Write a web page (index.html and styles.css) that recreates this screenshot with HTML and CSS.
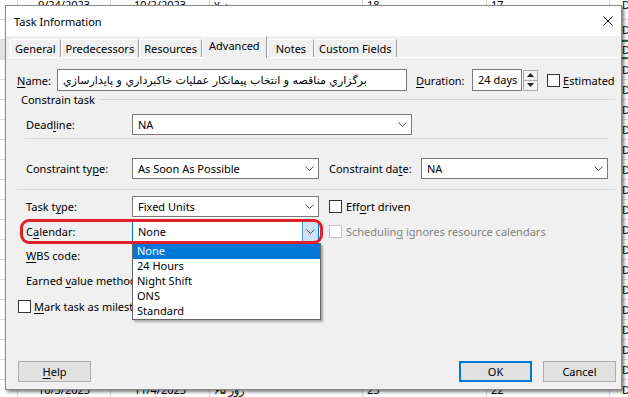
FILE: index.html
```html
<!DOCTYPE html>
<html lang="en">
<head>
<meta charset="UTF-8">
<meta name="viewport" content="width=device-width, initial-scale=1.0">
<title>Task Information</title>
<link rel="stylesheet" href="styles.css">
</head>
<body>

<!-- the project sheet behind the dialog (only the edges show) -->
<div class="sheet">
   <div class="sheet-row first"><span></span><span class="c">9/24/2023</span><span class="c">10/2/2023</span><span>۷ روز</span><span>18</span><span>17</span><span>D</span></div>
   <div class="sheet-row"><span></span><span></span><span></span><span></span><span></span><span></span><span>D</span></div>
   <div class="sheet-row sel"><span></span><span></span><span></span><span></span><span></span><span></span><span>D</span></div>
   <div class="sheet-row"><span></span><span></span><span></span><span></span><span></span><span></span><span>D</span></div>
   <div class="sheet-row"><span></span><span></span><span></span><span></span><span></span><span></span><span>D</span></div>
   <div class="sheet-row"><span></span><span></span><span></span><span></span><span></span><span></span><span>D</span></div>
   <div class="sheet-row"><span></span><span></span><span></span><span></span><span></span><span></span><span>D</span></div>
   <div class="sheet-row"><span></span><span></span><span></span><span></span><span></span><span></span><span>D</span></div>
   <div class="sheet-row"><span></span><span></span><span></span><span></span><span></span><span></span><span>D</span></div>
   <div class="sheet-row"><span></span><span></span><span></span><span></span><span></span><span></span><span>D</span></div>
   <div class="sheet-row"><span></span><span></span><span></span><span></span><span></span><span></span><span>D</span></div>
   <div class="sheet-row"><span></span><span></span><span></span><span></span><span></span><span></span><span>D</span></div>
   <div class="sheet-row"><span></span><span></span><span></span><span></span><span></span><span></span><span>D</span></div>
   <div class="sheet-row"><span></span><span></span><span></span><span></span><span></span><span></span><span>D</span></div>
   <div class="sheet-row"><span></span><span></span><span></span><span></span><span></span><span></span><span>D</span></div>
   <div class="sheet-row"><span></span><span></span><span></span><span></span><span></span><span></span><span>D</span></div>
   <div class="sheet-row"><span></span><span></span><span></span><span></span><span></span><span></span><span>D</span></div>
   <div class="sheet-row"><span></span><span></span><span></span><span></span><span></span><span></span><span>D</span></div>
   <div class="sheet-row"><span></span><span></span><span></span><span></span><span></span><span></span><span>D</span></div>
   <div class="sheet-row"><span></span><span class="c">10/3/2023</span><span class="c">11/4/2023</span><span>۶۵ روز</span><span>23</span><span>22</span><span>D</span></div>
</div>

<div class="dialog">
   <div class="titlebar">
      <span class="title">Task Information</span>
      <svg class="close" width="10" height="10" viewBox="0 0 10 10"><path d="M0.5 0.5L9.5 9.5M9.5 0.5L0.5 9.5"/></svg>
   </div>

   <div class="dlg-body">
      <div class="tabs">
         <div class="tab">General</div>
         <div class="tab">Predecessors</div>
         <div class="tab">Resources</div>
         <div class="tab active">Advanced</div>
         <div class="tab wide">Notes</div>
         <div class="tab">Custom Fields</div>
      </div>

      <div class="panel">
         <div class="row name-row">
            <label class="lbl lbl-name"><u>N</u>ame:</label>
            <div class="field name-field"><span class="fa" dir="rtl">برگزاري مناقصه و انتخاب پيمانکار عمليات خاکبرداري و پايدارسازي</span></div>
            <label class="lbl lbl-dur"><u>D</u>uration:</label>
            <div class="field dur-field">24 days</div>
            <div class="spin">
               <span><svg width="7" height="4" viewBox="0 0 7 4"><path d="M0 4L3.5 0L7 4Z"/></svg></span>
               <span><svg width="7" height="4" viewBox="0 0 7 4"><path d="M0 0L3.5 4L7 0Z"/></svg></span>
            </div>
            <span class="check est-check"></span>
            <span class="chk-lbl"><u>E</u>stimated</span>
         </div>

         <div class="legend"><span>Constrain task</span><i class="rule"></i></div>

         <div class="row inner first-inner">
            <label class="lbl">Dead<u>l</u>ine:</label>
            <div class="field combo deadline">NA
               <svg class="chev" width="9" height="5" viewBox="0 0 9 5"><polyline points="0.5,0.5 4.5,4.5 8.5,0.5"/></svg>
            </div>
         </div>

         <div class="sep sep-short"></div>

         <div class="row inner">
            <label class="lbl">Constraint ty<u>p</u>e:</label>
            <div class="field combo">As Soon As Possible
               <svg class="chev" width="9" height="5" viewBox="0 0 9 5"><polyline points="0.5,0.5 4.5,4.5 8.5,0.5"/></svg>
            </div>
            <label class="lbl lbl-date">Constraint da<u>t</u>e:</label>
            <div class="field combo">NA
               <svg class="chev" width="9" height="5" viewBox="0 0 9 5"><polyline points="0.5,0.5 4.5,4.5 8.5,0.5"/></svg>
            </div>
         </div>

         <div class="sep sep-long"></div>

         <div class="row inner">
            <label class="lbl">Task t<u>y</u>pe:</label>
            <div class="field combo">Fixed Units
               <svg class="chev" width="9" height="5" viewBox="0 0 9 5"><polyline points="0.5,0.5 4.5,4.5 8.5,0.5"/></svg>
            </div>
            <span class="check side-check"></span>
            <span class="chk-lbl">Eff<u>o</u>rt driven</span>
         </div>

         <div class="row inner cal-row">
            <label class="lbl">C<u>a</u>lendar:</label>
            <div class="field combo open">None
               <span class="drop"><svg class="chev" width="9" height="5" viewBox="0 0 9 5"><polyline points="0.5,0.5 4.5,4.5 8.5,0.5"/></svg></span>
               <div class="dropdown">
                  <div class="on">None</div>
                  <div>24 Hours</div>
                  <div>Night Shift</div>
                  <div>ONS</div>
                  <div>Standard</div>
               </div>
            </div>
            <span class="check side-check off"></span>
            <span class="chk-lbl off">Schedulin<u>g</u> ignores resource calendars</span>
            <div class="ring"></div>
         </div>

         <div class="row inner wbs-row">
            <label class="lbl"><u>W</u>BS code:</label>
         </div>

         <div class="row inner ev-row">
            <label class="lbl clip">Earned <u>v</u>alue method:</label>
         </div>

         <div class="row ms-row">
            <span class="check"></span>
            <span class="chk-lbl clip"><u>M</u>ark task as milestone</span>
         </div>
      </div>

      <div class="buttons">
         <button class="btn"><u>H</u>elp</button>
         <button class="btn default">OK</button>
         <button class="btn">Cancel</button>
      </div>
   </div>
</div>

</body>
</html>
```

FILE: styles.css
```css
* {
   box-sizing: border-box;
}

html,
body {
   margin: 0;
   height: 100%;
}

body {
   position: relative;
   overflow: hidden;
   background: #fff;
   color: #000;
   font-family: "Noto Sans", "DejaVu Sans", sans-serif;
   font-size: 11px;
}

u {
   text-decoration-thickness: 1px;
   text-underline-offset: 2px;
}

/* sheet behind */
.sheet {
   display: flex;
   flex-direction: column;
}

.sheet-row {
   display: grid;
   grid-template-columns: 18px 93px 99px 153px 124px 123px 18px;
   height: 20px;
   border-bottom: 1px solid #dadada;
}

.sheet-row > span {
   border-right: 1px solid #d4d4d4;
   line-height: 19px;
   padding-left: 4px;
   white-space: nowrap;
   overflow: hidden;
}

.sheet-row > span:last-child {
   padding-left: 12px;
   border-right: none;
}

.sheet-row .c {
   text-align: center;
   padding-left: 0;
}

.sheet-row.first > span {
   line-height: 9px;
}

.sheet-row.sel {
   box-shadow: inset 0 2px #217346, inset 0 -2px #217346;
}

.sheet-row.sel > span:first-child {
   background: #e1e1e1;
}

/* dialog */
.dialog {
   position: absolute;
   left: 5px;
   top: 5px;
   width: 617px;
   height: 385px;
   border: 1px solid #8a8a8a;
   background: #f0f0f0;
   box-shadow: 2px 2px 3px rgba(0, 0, 0, 0.5);
   display: flex;
   flex-direction: column;
}

.titlebar {
   height: 30px;
   background: #fff;
   display: flex;
   align-items: center;
   justify-content: space-between;
   padding: 0 8px;
}

.close path {
   stroke: #111;
   stroke-width: 1;
}

.dlg-body {
   flex: 1;
   display: flex;
   flex-direction: column;
   padding: 0 2px 7px;
}

.tabs {
   display: flex;
   align-items: flex-end;
   height: 21px;
   padding-left: 2px;
   position: relative;
   z-index: 1;
}

.tab {
   height: 18px;
   line-height: 17px;
   padding: 0 4px;
   border-top: 1px solid #fff;
   border-left: 1px solid #fff;
   border-right: 1px solid #a0a0a0;
   white-space: nowrap;
}

.tab.active {
   height: 22px;
   margin-bottom: -1px;
   padding: 0 6px 3px;
   line-height: 18px;
   background: #f0f0f0;
}

.tab.wide {
   padding: 0 7px 0 8px;
}

.panel {
   flex: 1;
   display: flex;
   flex-direction: column;
   border-top: 1px solid #fff;
}

.row {
   display: flex;
   align-items: center;
   height: 21px;
   position: relative;
}

.lbl {
   width: 106px;
   flex: none;
   white-space: nowrap;
}

.clip {
   overflow: hidden;
}

.field {
   height: 21px;
   border: 1px solid #7a7a7a;
   background: #fff;
   padding: 0 5px;
   line-height: 19px;
   white-space: nowrap;
   flex: none;
}

/* name row */
.name-row {
   margin-top: 11px;
   height: 22px;
   padding-left: 9px;
}

.lbl-name {
   width: 40px;
}

.name-field {
   width: 350px;
   height: 22px;
   line-height: 20px;
   overflow: hidden;
}

.fa {
   display: inline-block;
   font-family: "DejaVu Sans", sans-serif;
   font-size: 11px;
}

.lbl-dur {
   width: 56px;
   margin-left: 9px;
}

.dur-field {
   width: 50px;
   height: 22px;
   line-height: 20px;
}

.spin {
   width: 15px;
   height: 21px;
   margin-left: 1px;
   display: flex;
   flex-direction: column;
}

.spin span {
   flex: 1;
   display: flex;
   align-items: center;
   justify-content: center;
   border: 1px solid #acacac;
   background: #f3f3f3;
}

.spin span + span {
   border-top: none;
}

.spin path {
   fill: #222;
}

.check {
   width: 13px;
   height: 13px;
   border: 1px solid #333;
   background: #fff;
   flex: none;
}

.est-check {
   margin-left: 9px;
}

.chk-lbl {
   margin-left: 3px;
   white-space: nowrap;
}

/* group box */
.legend {
   display: flex;
   align-items: center;
   height: 14px;
   margin-top: 1px;
   padding: 0 4px 0 13px;
}

.rule {
   flex: 1;
   margin-left: 4px;
   border-top: 1px solid #d8d8d8;
}

.inner {
   padding-left: 18px;
}

.first-inner {
   margin-top: 8px;
}

.sep {
   height: 1px;
   background: #d8d8d8;
}

.sep-short {
   margin: 3px 11px 0 17px;
}

.sep-long {
   margin: 10px 4px 0 9px;
}

.sep-short + .row {
   margin-top: 19px;
}

.sep-long + .row {
   margin-top: 6px;
}

.combo {
   width: 187px;
   display: flex;
   align-items: center;
   justify-content: space-between;
   padding-right: 4px;
}

.combo.deadline {
   width: 280px;
}

.chev polyline {
   fill: none;
   stroke: #555;
   stroke-width: 1;
}

.lbl-date {
   width: 92px;
   margin-left: 10px;
}

.side-check {
   margin-left: 10px;
}

.side-check + .chk-lbl {
   margin-left: 4px;
}

.check.off {
   border-color: #c3c3c3;
}

.chk-lbl.off {
   color: #838383;
}

/* open calendar combo */
.cal-row {
   margin-top: 4px;
}

.combo.open {
   position: relative;
   padding-right: 0;
   border-color: #0078d7;
}

.drop {
   width: 16px;
   height: 19px;
   display: flex;
   align-items: center;
   justify-content: center;
   background: #cce4f7;
   border-left: 1px solid #569de5;
}

.dropdown {
   position: absolute;
   left: -1px;
   top: 21px;
   width: 189px;
   border: 1px solid #646464;
   background: #fff;
   box-shadow: 2px 2px 2px rgba(0, 0, 0, 0.3);
   z-index: 3;
   line-height: 14px;
}

.dropdown div {
   height: 15px;
   padding-left: 4px;
   color: #000;
}

.dropdown .on {
   background: #0078d7;
   color: #fff;
}

.ring {
   position: absolute;
   left: 12px;
   top: -2px;
   width: 303px;
   height: 25px;
   border: 3.5px solid #e2202c;
   border-radius: 9px;
   z-index: 4;
}

.wbs-row {
   margin-top: 3px;
   height: 20px;
}

.ev-row {
   margin-top: 5px;
   height: 20px;
}

.ms-row {
   margin-top: 7px;
   height: 19px;
   padding-left: 10px;
}

.ms-row .chk-lbl {
   width: 98px;
}

/* buttons */
.buttons {
   display: flex;
   margin-top: auto;
   padding: 0 3px 0 10px;
   gap: 11px;
}

.btn {
   width: 73px;
   height: 21px;
   padding: 0;
   border: 1px solid #adadad;
   background: #e1e1e1;
   color: #000;
   font: inherit;
}

.btn.default {
   margin-left: auto;
   border: 2px solid #0078d7;
}
```
